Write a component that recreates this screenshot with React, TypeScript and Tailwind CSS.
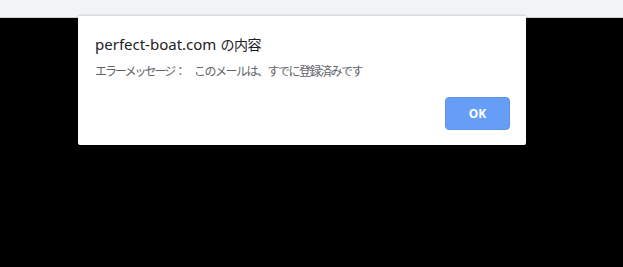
import React from "react";

export default function App() {
  return (
    <div className="relative w-[623px] h-[267px] bg-black overflow-hidden font-['Noto_Sans','Noto_Sans_CJK_JP',sans-serif]">
      {/* Browser chrome strip */}
      <div className="h-[18px] bg-[#f1f3f4] border-b border-[#d2d2d2]" />

      {/* Alert dialog */}
      <div className="absolute left-[78px] top-[15px] w-[448px] h-[130px] bg-white rounded-[2px] border-t border-[#d9d9d9] shadow-[0_1px_3px_rgba(0,0,0,0.3)] flex flex-col px-[17px]">
        <div className="mt-[17px] h-[22px] flex items-center text-[15px] text-[#202124] leading-none">
          <span>perfect-boat.com</span>
          <span className="ml-[4px] font-['Noto_Sans_CJK_JP',sans-serif] text-[14px] tracking-[-0.5px]">の内容</span>
        </div>
        <div className="mt-[6px] h-[20px] flex items-center text-[12px] text-[#5f6368] leading-none font-['Noto_Sans_CJK_JP',sans-serif]">
          <span className="tracking-[-2px] w-[99px]">エラーメッセージ：</span>
          <span className="tracking-[-1.5px]">このメールは、すでに登録済みです</span>
        </div>
        <div className="flex justify-end mt-[16px] -mr-px">
          <button className="w-[65px] h-[33px] rounded-[4px] bg-[#669df6] border border-[#5d95ee] text-white text-[12px] font-bold font-['Noto_Sans',sans-serif] flex items-center justify-center">
            OK
          </button>
        </div>
      </div>
    </div>
  );
}
